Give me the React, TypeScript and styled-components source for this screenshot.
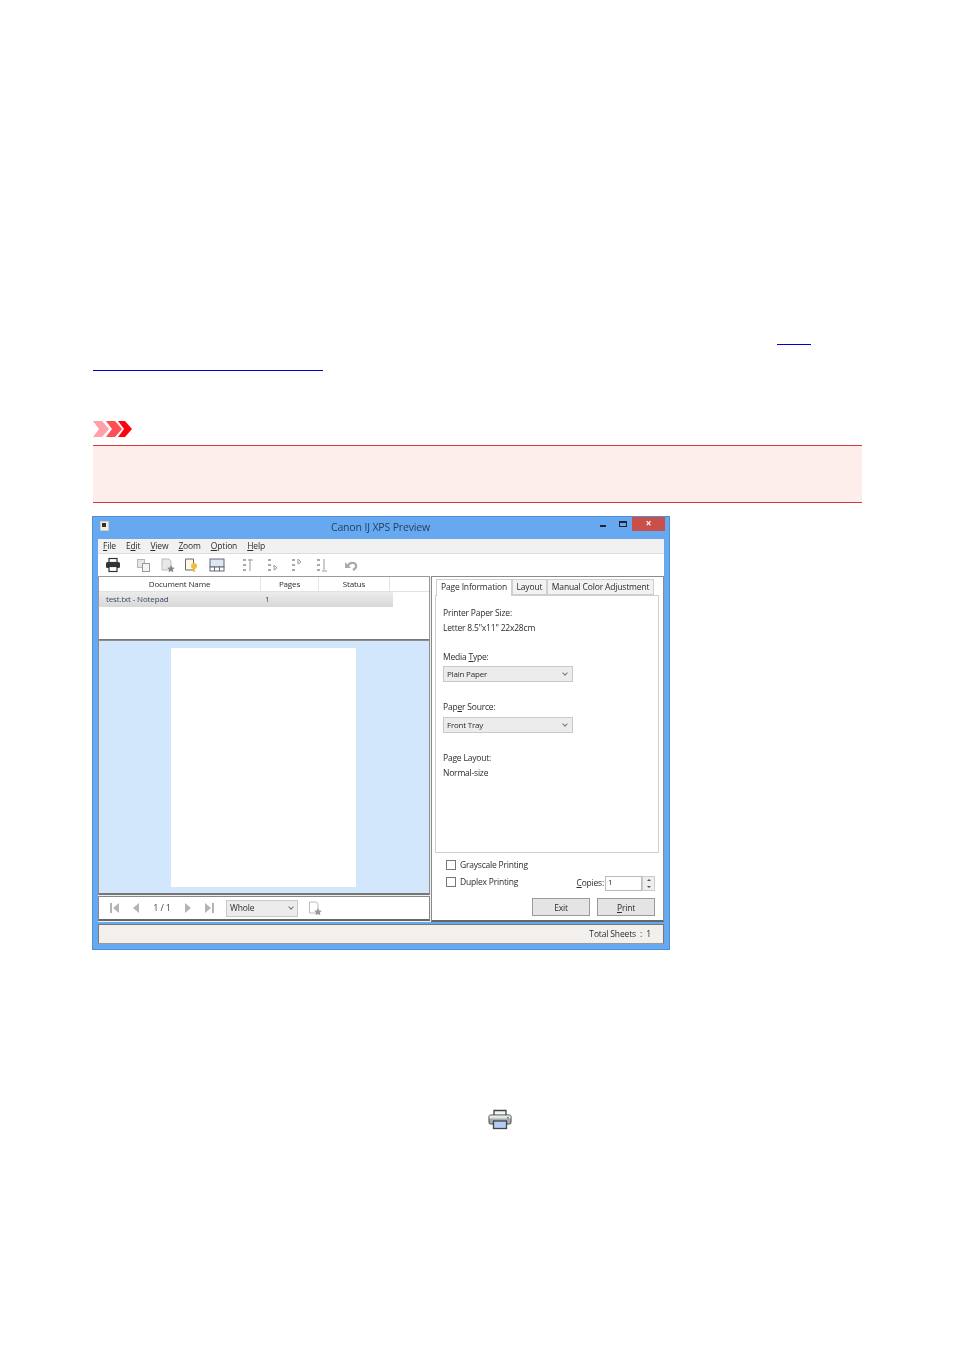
import React from "react";
import styled, { createGlobalStyle } from "styled-components";

const Global = createGlobalStyle`
  html, body { margin: 0; padding: 0; background: #fff; }
  body { font-family: "Open Sans", "Liberation Sans", sans-serif; }
`;

const Page = styled.div`
  width: 954px; height: 1350px; box-sizing: border-box; padding: 344px 92px 0 93px;
  display: flex; flex-direction: column; overflow: hidden;
`;
const LinkLineOne = styled.div`display: flex; justify-content: flex-end; padding-right: 51px; height: 26px;`;
const LinkMark = styled.div<{ $w: number }>`width: ${p => p.$w}px; height: 1px; background: #0000d8;`;
const ImportantIcon = styled.svg`display: block; margin-top: 50px;`;
const Note = styled.div`
  margin-top: 8px; height: 56px; background: #fdeeec;
  border-top: 1px solid #cf3a3a; border-bottom: 1px solid #cf3a3a;
`;
const Window = styled.div`
  margin: 13px 0 0 -1px; width: 578px; height: 434px; box-sizing: border-box;
  background: #66a9f1; border: 1px solid #4f8fd6; padding: 0 5px 5px 5px;
  display: flex; flex-direction: column; color: #2c2c2c; filter: blur(0.5px);
  font-size: 8.5px; line-height: 12px; letter-spacing: -0.15px;
`;
const TitleBar = styled.div`height: 22px; display: flex; align-items: center; position: relative; flex: none;`;
const Title = styled.div`flex: 1; text-align: center; font-size: 10.5px; color: #27405e; padding-bottom: 2px; padding-right: 1px;`;
const AppIcon = styled.div`
  position: absolute; left: 2px; top: 4px; width: 9px; height: 10px; background: #f3efe0; border: 1px solid #ccc; box-sizing: border-box;
  &::after { content: ""; position: absolute; left: 1px; top: 1px; width: 4px; height: 4px; background: #332; }
`;
const WinButtons = styled.div`position: absolute; right: -1px; top: 0; display: flex; align-items: flex-start;`;
const WinMin = styled.div`width: 6px; height: 2px; background: #223; margin: 8px 13px 0 0;`;
const WinMax = styled.div`width: 8px; height: 6px; box-sizing: border-box; border: 1px solid #223; border-top-width: 2px; margin: 4px 5px 0 0;`;
const WinClose = styled.div`width: 33px; height: 14px; background: #c9504a; color: #fff; text-align: center; font-size: 10px; line-height: 13px; font-weight: 700;`;
const Menu = styled.div`height: 14px; background: #f1f1f1; border-bottom: 1px solid #ddd; display: flex; padding-left: 5px; gap: 10px; flex: none; align-items: center; font-size: 8.5px;`;
const Key = styled.span`text-decoration: underline;`;
const Toolbar = styled.div`height: 22px; background: #fff; display: flex; align-items: center; flex: none; position: relative; padding-left: 7px;`;
const Tool = styled.svg<{ $ml: number }>`margin-left: ${p => p.$ml}px; flex: none; display: block;`;
const Body = styled.div`flex: 1; display: grid; grid-template-columns: 332px 1fr; gap: 0 1px; min-height: 0; background: #f0f0f0;`;
const LeftCol = styled.div`display: flex; flex-direction: column;`;
const ListPane = styled.div`height: 64px; box-sizing: border-box; background: #fff; border: 1px solid #9a9a9a; border-bottom-color: #777; flex: none;`;
const ListHead = styled.div`display: grid; grid-template-columns: 162px 58px 71px 1fr; height: 14px; border-bottom: 1px solid #e2e2e2; text-align: center; font-size: 8px; line-height: 14px;`;
const HeadCell = styled.div`border-right: 1px solid #e5e5e5; box-sizing: border-box;`;
const ListRow = styled.div`
  width: 294px; height: 15px; background: linear-gradient(#ececec, #d8d8d8); display: grid; grid-template-columns: 159px 1fr;
  font-size: 8px; line-height: 14px; color: #3a4a66; padding-left: 7px; box-sizing: border-box;
`;
const Preview = styled.div`height: 255px; box-sizing: border-box; background: #d2e7fc; border: 1px solid #8d8d8d; border-bottom: 2px solid #777; display: flex; justify-content: center; padding-top: 7px; flex: none;`;
const Sheet = styled.div`width: 185px; height: 239px; background: #fff; margin-right: 2px;`;
const NavBar = styled.div`height: 25px; box-sizing: border-box; margin-top: 1px; background: #fff; border: 1px solid #888; border-bottom: 2px solid #666; display: flex; align-items: center; padding-left: 10px; font-size: 9px; flex: none;`;
const NavBtn = styled.svg<{ $ml: number }>`margin-left: ${p => p.$ml}px; display: block; flex: none;`;
const PageNo = styled.div`margin-left: 8px; width: 26px; text-align: center; color: #444;`;
const ZoomSelect = styled.div`
  margin-left: 11px; width: 72px; height: 17px; box-sizing: border-box; background: #ececec; border: 1px solid #c9c9c9;
  display: flex; align-items: center; justify-content: space-between; padding: 0 4px 0 3px; font-size: 8.5px;
`;
const Chevron = styled.span`width: 3px; height: 3px; border-right: 1px solid #777; border-bottom: 1px solid #777; transform: rotate(45deg); margin-top: -2px;`;
const RightCol = styled.div`box-sizing: border-box; height: 346px; background: #fff; border: 1px solid #8a8a8a; border-bottom: 2px solid #666; padding: 2px 4px 0 3px; display: flex; flex-direction: column; letter-spacing: -0.2px;`;
const Tabs = styled.div`display: flex; height: 16px; padding-left: 1px; flex: none; position: relative; z-index: 1;`;
const Tab = styled.div<{ $active?: boolean }>`
  box-sizing: border-box; height: ${p => p.$active ? 17 : 16}px; padding: 0 3.5px 0 4px; background: ${p => p.$active ? "#fff" : "#f2f2f2"};
  border: 1px solid #cfcfcf; border-bottom: ${p => p.$active ? "none" : "1px solid #cfcfcf"};
  font-size: 8.5px; line-height: 14px; white-space: nowrap; letter-spacing: -0.16px;
`;
const TabPage = styled.div`box-sizing: border-box; height: 258px; flex: none; border: 1px solid #cfcfcf; padding: 11px 0 0 7px; margin-right: 0;`;
const Label = styled.div<{ $mt?: number }>`height: 12px; margin-top: ${p => p.$mt ?? 0}px; font-size: 8.5px; line-height: 12px;`;
const Select = styled.div<{ $mt: number }>`
  margin-top: ${p => p.$mt}px; width: 130px; height: 16px; box-sizing: border-box; background: #ececec; border: 1px solid #c9c9c9;
  display: flex; align-items: center; justify-content: space-between; padding: 0 5px 0 3px; font-size: 8px;
`;
const CheckRow = styled.div<{ $mt: number }>`display: flex; align-items: center; margin: ${p => p.$mt}px 0 0 11px; height: 12px; font-size: 8.5px; gap: 4px;`;
const Box = styled.div`width: 10px; height: 10px; box-sizing: border-box; background: #fff; border: 1px solid #777;`;
const DuplexRow = styled.div`display: flex; align-items: flex-start; justify-content: space-between; margin-top: 5px; height: 15px; padding-right: 4px;`;
const CopiesGroup = styled.div`display: flex; align-items: center; gap: 1px; font-size: 8.5px;`;
const CopiesLabel = styled.span`margin-top: -2px;`;
const CopiesInput = styled.div`width: 37px; height: 15px; box-sizing: border-box; border: 1px solid #bbb; padding-left: 2px; font-size: 8px; line-height: 10px; background: #fff;`;
const Spin = styled.div`width: 13px; height: 15px; box-sizing: border-box; border: 1px solid #ccc; background: #eee; margin-left: -1px; display: flex; flex-direction: column; align-items: center; justify-content: space-around;`;
const SpinUp = styled.div`width: 0; height: 0; border: 2px solid transparent; border-top: 0; border-bottom: 2px solid #456;`;
const SpinDown = styled.div`width: 0; height: 0; border: 2px solid transparent; border-bottom: 0; border-top: 2px solid #456;`;
const Actions = styled.div`display: flex; justify-content: flex-end; gap: 7px; margin-top: 7px; padding-right: 4px;`;
const Btn = styled.div`width: 58px; height: 18px; box-sizing: border-box; background: #e4e4e4; border: 1px solid #9a9a9a; text-align: center; font-size: 8.5px; line-height: 17px;`;
const Status = styled.div`flex: none; height: 20px; margin-top: 2px; box-sizing: border-box; background: #f3efec; border: 1px solid #777; border-bottom-color: #999; text-align: right; padding-right: 12px; font-size: 8.5px; line-height: 18px; white-space: pre;`;
const BottomPrinter = styled.svg`display: block; margin: 158px 0 0 395px;`;

const Printer = ({ size, ml }: { size: number; ml: number }) => (
  <Tool $ml={ml} width={size} height={size} viewBox="0 0 16 16">
    <rect x="4" y="1.500" width="8" height="4" fill="#fff" stroke="#333" strokeWidth="1.200" />
    <rect x="1" y="5" width="14" height="6" rx="1.500" fill="#333" />
    <rect x="4" y="9.500" width="8" height="5" fill="#fff" stroke="#333" strokeWidth="1.200" />
  </Tool>
);
const Copy = ({ ml }: { ml: number }) => (
  <Tool $ml={ml} width="15" height="15" viewBox="0 0 15 15" fill="#e6e6e6" stroke="#b5b5b5">
    <rect x="1.500" y="1.500" width="7" height="8" />
    <rect x="6.500" y="5.500" width="7" height="8" fill="#f4f4f4" stroke="#999" />
  </Tool>
);
const DocStar = ({ ml }: { ml: number }) => (
  <Tool $ml={ml} width="15" height="15" viewBox="0 0 15 15">
    <path d="M2 1h7l2 2v9H2z" fill="#e8e8e8" stroke="#bbb" />
    <path d="M11 7l1.200 2.500 2.600.3-1.900 1.800.5 2.600-2.400-1.300-2.400 1.300.5-2.600-1.900-1.800 2.600-.3z" fill="#888" />
  </Tool>
);
const DocKey = ({ ml }: { ml: number }) => (
  <Tool $ml={ml} width="15" height="15" viewBox="0 0 15 15">
    <path d="M1.500 1h8v11h-8z" fill="#fff8e8" stroke="#667" />
    <circle cx="10" cy="8" r="3" fill="#f2bd3a" />
    <rect x="9.200" y="9" width="1.700" height="5" fill="#f2bd3a" />
  </Tool>
);
const Filmstrip = ({ ml }: { ml: number }) => (
  <Tool $ml={ml} width="16" height="14" viewBox="0 0 16 14">
    <rect x="1" y="1" width="14" height="8" fill="#dce8f2" stroke="#667" />
    <rect x="1" y="9" width="14" height="4" fill="#fff" stroke="#667" />
    <path d="M5.500 9v4M10.500 9v4" stroke="#667" />
  </Tool>
);
const Order = ({ ml, d }: { ml: number; d: string }) => (
  <Tool $ml={ml} width="11" height="16" viewBox="0 0 11 16">
    <path d="M1 2h3v2H1zM1 7h3v2H1zM1 12h3v2H1z" fill="#aaa" />
    <path d={d} stroke="#999" fill="none" />
  </Tool>
);
const Undo = ({ ml }: { ml: number }) => (
  <Tool $ml={ml} width="14" height="12" viewBox="0 0 14 12">
    <path d="M4 7c1-4 7-4 8-1s-1 4-3 5" fill="none" stroke="#aaa" strokeWidth="2.200" />
    <path d="M1 3v6h6z" fill="#aaa" />
  </Tool>
);
const NavIcon = ({ ml, d }: { ml: number; d: string }) => (
  <NavBtn $ml={ml} width="11" height="12" viewBox="0 0 11 12"><path d={d} fill="#b4b4b4" /></NavBtn>
);

export default function App() {
  return (
    <Page>
      <Global />
      <LinkLineOne><LinkMark $w={34} /></LinkLineOne>
      <LinkMark $w={230} />
      <ImportantIcon width="39" height="16" viewBox="0 0 39 16">
        <path d="M0 0h9l7 8-7 8H0l6-8z" fill="#ffa0a8" />
        <path d="M13 0h9l7 8-7 8h-9l6-8z" fill="#ff4d55" />
        <path d="M25 0h7l7 8-7 8h-7l6-8z" fill="#fb0410" />
      </ImportantIcon>
      <Note />
      <Window>
        <TitleBar>
          <AppIcon />
          <Title>Canon IJ XPS Preview</Title>
          <WinButtons><WinMin /><WinMax /><WinClose>×</WinClose></WinButtons>
        </TitleBar>
        <Menu>
          <span><Key>F</Key>ile</span>
          <span>E<Key>d</Key>it</span>
          <span><Key>V</Key>iew</span>
          <span><Key>Z</Key>oom</span>
          <span><Key>O</Key>ption</span>
          <span><Key>H</Key>elp</span>
        </Menu>
        <Toolbar>
          <Printer size={16} ml={0} />
          <Copy ml={15} />
          <DocStar ml={9} />
          <DocKey ml={9} />
          <Filmstrip ml={10} />
          <Order ml={17} d="M8 2v12M6 3h5" />
          <Order ml={14} d="M7 8v5l3-2z" />
          <Order ml={13} d="M7 2v5l3-2z" />
          <Order ml={14} d="M8 2v11M6 14h5" />
          <Undo ml={17} />
        </Toolbar>
        <Body>
          <LeftCol>
            <ListPane>
              <ListHead>
                <HeadCell>Document Name</HeadCell><HeadCell>Pages</HeadCell><HeadCell>Status</HeadCell><div />
              </ListHead>
              <ListRow><span>test.txt - Notepad</span><span>1</span></ListRow>
            </ListPane>
            <Preview><Sheet /></Preview>
            <NavBar>
              <NavIcon ml={0} d="M1 1h2v10H1zM10 1v10L4 6z" />
              <NavIcon ml={10} d="M9 1v10L3 6z" />
              <PageNo>1 / 1</PageNo>
              <NavIcon ml={8} d="M2 1v10l6-5z" />
              <NavIcon ml={10} d="M1 1v10l6-5zM8 1h2v10H8z" />
              <ZoomSelect>Whole<Chevron /></ZoomSelect>
              <Tool $ml={10} width="15" height="15" viewBox="0 0 15 15">
                <path d="M1.500 1h7l1.500 2v9H1.500z" fill="#fff" stroke="#bbb" />
                <path d="M10 7l1.200 2.500 2.600.3-1.900 1.800.5 2.600-2.400-1.300-2.400 1.300.5-2.600-1.900-1.800 2.600-.3z" fill="#999" />
              </Tool>
            </NavBar>
          </LeftCol>
          <RightCol>
            <Tabs>
              <Tab $active>Page Information</Tab>
              <Tab>Layout</Tab>
              <Tab>Manual Color Adjustment</Tab>
            </Tabs>
            <TabPage>
              <Label>Printer Paper Size:</Label>
              <Label $mt={3}>Letter 8.5"x11" 22x28cm</Label>
              <Label $mt={17}>Media <Key>T</Key>ype:</Label>
              <Select $mt={3}>Plain Paper<Chevron /></Select>
              <Label $mt={19}>Pap<Key>e</Key>r Source:</Label>
              <Select $mt={4}>Front Tray<Chevron /></Select>
              <Label $mt={19}>Page Layout:</Label>
              <Label $mt={3}>Normal-size</Label>
            </TabPage>
            <CheckRow $mt={6}><Box />Grayscale Printing</CheckRow>
            <DuplexRow>
              <CheckRow $mt={0}><Box />Duplex Printing</CheckRow>
              <CopiesGroup>
                <CopiesLabel><Key>C</Key>opies:</CopiesLabel>
                <CopiesInput>1</CopiesInput>
                <Spin><SpinUp /><SpinDown /></Spin>
              </CopiesGroup>
            </DuplexRow>
            <Actions><Btn>Exit</Btn><Btn><Key>P</Key>rint</Btn></Actions>
          </RightCol>
        </Body>
        <Status>{"Total Sheets  :  1"}</Status>
      </Window>
      <BottomPrinter width="24" height="22" viewBox="0 0 24 22">
        <path d="M6 9V2.500h12V9" fill="#f2f2f2" stroke="#444" strokeWidth="1.300" />
        <rect x="1" y="7" width="22" height="9" rx="1.500" fill="#a9acac" stroke="#444" />
        <rect x="1.500" y="7.500" width="21" height="3" fill="#e5e6e6" />
        <rect x="19" y="9" width="2" height="1.500" fill="#35b04a" />
        <rect x="5.500" y="13" width="13" height="7.500" fill="#b4cdf5" stroke="#444" strokeWidth="1.300" />
      </BottomPrinter>
    </Page>
  );
}
